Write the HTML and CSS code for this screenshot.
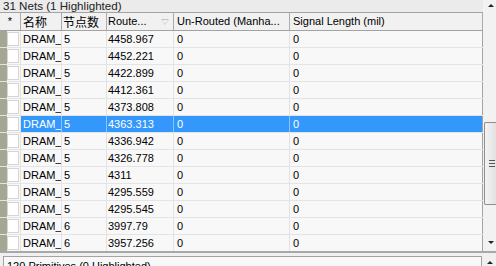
FILE: index.html
```html
<!DOCTYPE html>
<html>
<head>
<meta charset="utf-8">
<link rel="stylesheet" href="styles.css">
</head>
<body>
<div class="top">
  <div class="main">
    <div class="title">31 Nets (1 Highlighted)</div>
    <div class="hdr">
      <div class="c c0">*</div>
      <div class="c c1"><span class="cjk">名称</span></div>
      <div class="c c2"><span class="cjk">节点数</span></div>
      <div class="c c3">Route...<span class="sort"></span></div>
      <div class="c c4">Un-Routed (Manha...</div>
      <div class="c c5">Signal Length (mil)</div>
    </div>
    <div class="rows">
      <div class="row"><div class="c c0"><span class="box"></span></div><div class="c c1">DRAM_</div><div class="c c2">5</div><div class="c c3">4458.967</div><div class="c c4">0</div><div class="c c5">0</div></div>
      <div class="row"><div class="c c0"><span class="box"></span></div><div class="c c1">DRAM_</div><div class="c c2">5</div><div class="c c3">4452.221</div><div class="c c4">0</div><div class="c c5">0</div></div>
      <div class="row"><div class="c c0"><span class="box"></span></div><div class="c c1">DRAM_</div><div class="c c2">5</div><div class="c c3">4422.899</div><div class="c c4">0</div><div class="c c5">0</div></div>
      <div class="row"><div class="c c0"><span class="box"></span></div><div class="c c1">DRAM_</div><div class="c c2">5</div><div class="c c3">4412.361</div><div class="c c4">0</div><div class="c c5">0</div></div>
      <div class="row"><div class="c c0"><span class="box"></span></div><div class="c c1">DRAM_</div><div class="c c2">5</div><div class="c c3">4373.808</div><div class="c c4">0</div><div class="c c5">0</div></div>
      <div class="row sel"><div class="c c0"><span class="box"></span></div><div class="c c1">DRAM_</div><div class="c c2">5</div><div class="c c3">4363.313</div><div class="c c4">0</div><div class="c c5">0</div></div>
      <div class="row"><div class="c c0"><span class="box"></span></div><div class="c c1">DRAM_</div><div class="c c2">5</div><div class="c c3">4336.942</div><div class="c c4">0</div><div class="c c5">0</div></div>
      <div class="row"><div class="c c0"><span class="box"></span></div><div class="c c1">DRAM_</div><div class="c c2">5</div><div class="c c3">4326.778</div><div class="c c4">0</div><div class="c c5">0</div></div>
      <div class="row"><div class="c c0"><span class="box"></span></div><div class="c c1">DRAM_</div><div class="c c2">5</div><div class="c c3">4311</div><div class="c c4">0</div><div class="c c5">0</div></div>
      <div class="row"><div class="c c0"><span class="box"></span></div><div class="c c1">DRAM_</div><div class="c c2">5</div><div class="c c3">4295.559</div><div class="c c4">0</div><div class="c c5">0</div></div>
      <div class="row"><div class="c c0"><span class="box"></span></div><div class="c c1">DRAM_</div><div class="c c2">5</div><div class="c c3">4295.545</div><div class="c c4">0</div><div class="c c5">0</div></div>
      <div class="row"><div class="c c0"><span class="box"></span></div><div class="c c1">DRAM_</div><div class="c c2">6</div><div class="c c3">3997.79</div><div class="c c4">0</div><div class="c c5">0</div></div>
      <div class="row"><div class="c c0"><span class="box"></span></div><div class="c c1">DRAM_</div><div class="c c2">6</div><div class="c c3">3957.256</div><div class="c c4">0</div><div class="c c5">0</div></div>
    </div>
  </div>
  <div class="vscroll">
    <div class="arrow"><span class="up"></span></div>
    <div class="thumb"><span class="grip"></span><span class="grip"></span><span class="grip"></span></div>
    <div class="fill"></div>
    <div class="arrow"><span class="down"></span></div>
  </div>
</div>
<div class="splitter"></div>
<div class="bottom">
  <div class="panel">120 Primitives (0 Highlighted)</div>
  <div class="vscroll2"><span class="up"></span></div>
</div>
</body>
</html>
```
FILE: styles.css
```css
html, body {
  margin: 0;
  padding: 0;
}
body {
  width: 496px;
  height: 266px;
  overflow: hidden;
  background: #ececec;
  font-family: "Liberation Sans", Arial, "Noto Sans CJK SC", sans-serif;
  font-size: 11px;
  color: #000;
}
.top {
  display: flex;
  height: 251px;
  overflow: hidden;
}
.main {
  width: 483px;
  display: flex;
  flex-direction: column;
}
.title {
  height: 13px;
  line-height: 12px;
  padding-left: 3px;
  font-size: 11.6px;
  color: #222;
  background: #ebebeb;
  white-space: nowrap;
}
.hdr {
  display: flex;
  height: 17px;
  border-top: 1px solid #a3a3a3;
  border-bottom: 1px solid #a3a3a3;
  background: #f1f1f1;
}
.c {
  box-sizing: border-box;
  border-right: 1px solid #e2e2e2;
  padding-left: 2px;
  white-space: nowrap;
  overflow: hidden;
  display: flex;
  align-items: center;
}
.hdr .c {
  border-right-color: #ababab;
  line-height: 17px;
}
.c0 { width: 21px; }
.c1 { width: 41px; }
.c2 { width: 45px; }
.c3 { width: 67px; }
.c4 { width: 116px; }
.c5 { width: 193px; border-right-color: #a3a3a3; }
.hdr .c0 { justify-content: center; padding-left: 0; }
.hdr .c1 { padding-left: 2px; }
.hdr .c2 { padding-left: 1px; }
.row .c1 { padding-left: 2px; }
.row .c2 { padding-left: 2px; }
.c3 { padding-left: 1px; }
.c4, .c5 { padding-left: 3px; }
.cjk {
  font-family: "Noto Sans CJK SC", sans-serif;
  font-size: 12px;
}
.sort {
  margin-left: 14px;
  width: 0;
  height: 0;
  border-left: 4px solid transparent;
  border-right: 4px solid transparent;
  border-top: 6px solid #c4c4c4;
  position: relative;
}
.sort::after {
  content: "";
  position: absolute;
  left: -3px;
  top: -5px;
  border-left: 3px solid transparent;
  border-right: 3px solid transparent;
  border-top: 4px solid #f1f1f1;
}
.rows {
  display: flex;
  flex-direction: column;
  background: #f8f8f8;
}
.row {
  display: flex;
  height: 17px;
  box-sizing: border-box;
  border-bottom: 1px solid #e4e4e4;
  background: #f8f8f8;
}
.row .c0 {
  padding-left: 0;
  background: #f8f8f8;
  border-left: 7px solid #a6a694;
}
.box {
  width: 12px;
  height: 14px;
  background: #fff;
  box-sizing: border-box;
  border: 1px solid #d6d6d0;
}
.row.sel {
  background: #3397fb;
  color: #fff;
}
.row.sel .c { border-right-color: #8cc2f8; }
.row.sel .c5 { border-right-color: #a3a3a3; }
.row.sel .c0 { background: #f8f8f8; border-right-color: #e2e2e2; }
.vscroll {
  width: 13px;
  background: #f2f2f2;
  display: flex;
  flex-direction: column;
}
.arrow {
  height: 11px;
  display: flex;
  justify-content: center;
  align-items: center;
  padding-left: 3px;
}
.arrow:last-child { margin-bottom: 3px; }
.up {
  width: 0;
  height: 0;
  border-left: 3px solid transparent;
  border-right: 3px solid transparent;
  border-bottom: 3px solid #222;
}
.down {
  width: 0;
  height: 0;
  border-left: 3px solid transparent;
  border-right: 3px solid transparent;
  border-top: 3px solid #222;
}
.thumb {
  margin-top: 111px;
  margin-left: 1px;
  height: 83px;
  box-sizing: border-box;
  border: 1px solid #8f8f8f;
  border-right: none;
  border-radius: 2px 0 0 2px;
  background: linear-gradient(to right, #f4f4f4, #e2e2e2);
  display: flex;
  flex-direction: column;
  justify-content: center;
  align-items: center;
  gap: 2px;
  padding-left: 2px;
}
.grip {
  width: 6px;
  height: 1px;
  background: #555;
}
.fill { flex: 1; }
.splitter {
  height: 2px;
  background: #a8a8a8;
}
.bottom {
  display: flex;
  height: 13px;
  background: #f0f0f0;
}
.panel {
  margin: 3px 0 0 3px;
  width: 479px;
  box-sizing: border-box;
  border-top: 1px solid #a3a3a3;
  border-left: 1px solid #a3a3a3;
  border-right: 1px solid #a3a3a3;
  background: #f8f8f8;
  padding: 3px 0 0 3px;
  line-height: 12px;
  white-space: nowrap;
}
.vscroll2 {
  width: 14px;
  display: flex;
  justify-content: center;
  padding-top: 8px;
  padding-left: 2px;
  box-sizing: border-box;
}
```
